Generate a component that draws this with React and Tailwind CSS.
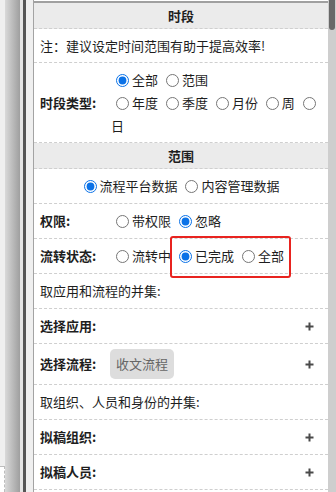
import React from "react";

const font = { fontFamily: '"Noto Sans CJK SC", "Noto Sans", sans-serif' };

function Radio({ checked, label, name }) {
  return (
    <>
      <input
        type="radio"
        name={name}
        defaultChecked={checked}
        className="ml-[5px] mr-[3px] h-[13px] w-[13px] align-[-2px] accent-[#0b72e7]"
      />
      <wbr />
      {label}
    </>
  );
}

function Plus() {
  return (
    <svg width="9" height="9" viewBox="0 0 9 9" className="shrink-0">
      <path d="M4.5 0.5v8M0.5 4.5h8" stroke="#4a4a4a" strokeWidth="2" />
    </svg>
  );
}

const Header = ({ children }) => (
  <div className="flex h-[26px] items-center justify-center border-b border-dashed border-[#cfcfcf] bg-[#ebebeb] font-bold">
    {children}
  </div>
);

const Row = ({ children, className = "" }) => (
  <div
    className={
      "flex h-[35px] items-center border-b border-dashed border-[#cfcfcf] pl-[6px] pr-[14px] " +
      className
    }
  >
    {children}
  </div>
);

const Label = ({ children }) => (
  <div className="w-[71px] shrink-0 font-bold">{children}</div>
);

export default function App() {
  return (
    <div
      className="relative flex h-[492px] w-[336px] overflow-hidden bg-white text-[13px] text-[#1e1e1e]"
      style={font}
    >
      {/* left frame strip */}
      <div className="flex w-[34px] shrink-0">
        <div className="flex w-[5px] flex-col bg-[#efefef]">
          <div className="flex-1" />
          <div className="h-[26px] border-r border-t border-dashed border-[#bdbdbd] bg-white" />
        </div>
        <div className="w-[15px] bg-gradient-to-r from-[#d9d9d9] to-[#9f9f9f]" />
        <div className="w-[3px] bg-[#e4e4e4]" />
        <div className="w-[3px] bg-[#555555]" />
        <div className="w-[7px] bg-[#efefef]" />
        <div className="w-px bg-[#a3a3a3]" />
      </div>

      {/* main panel */}
      <div className="flex-1 pt-px">
        <div className="border-t-2 border-[#a0a0a0]">
          <Header>时段</Header>
          <div className="flex h-[34px] items-center border-b border-dashed border-[#cfcfcf] pl-[6px]">
            注：建议设定时间范围有助于提高效率!
          </div>
          <div className="flex h-[80px] items-center border-b border-dashed border-[#cfcfcf] pl-[6px]">
            <Label>时段类型:</Label>
            <div className="w-[213px] leading-[23px]">
              <Radio name="t" checked label="全部" /> <Radio name="t" label="范围" />
              <br />
              <Radio name="p" label="年度" /> <Radio name="p" label="季度" />{" "}
              <Radio name="p" label="月份" /> <Radio name="p" label="周" />{" "}
              <Radio name="p" label="日" />
            </div>
          </div>
          <Header>范围</Header>
          <div className="flex h-[35px] items-center justify-center border-b border-dashed border-[#cfcfcf] pr-[4px]">
            <div>
              <Radio name="d" checked label="流程平台数据" /> <Radio name="d" label="内容管理数据" />
            </div>
          </div>
          <Row>
            <Label>权限:</Label>
            <div>
              <Radio name="q" label="带权限" /> <Radio name="q" checked label="忽略" />
            </div>
          </Row>
          <Row>
            <Label>流转状态:</Label>
            <div>
              <Radio name="s" label="流转中" /> <Radio name="s" checked label="已完成" />{" "}
              <Radio name="s" label="全部" />
            </div>
          </Row>
          <Row>取应用和流程的并集:</Row>
          <Row className="justify-between">
            <Label>选择应用:</Label>
            <Plus />
          </Row>
          <Row className="h-[41px] justify-between">
            <div className="flex items-center">
              <Label>选择流程:</Label>
              <div className="-ml-px flex h-[30px] items-center rounded-[5px] bg-[#dddddd] px-[6px] text-[#666666]">
                收文流程
              </div>
            </div>
            <Plus />
          </Row>
          <Row>取组织、人员和身份的并集:</Row>
          <Row className="justify-between">
            <Label>拟稿组织:</Label>
            <Plus />
          </Row>
          <Row className="justify-between">
            <Label>拟稿人员:</Label>
            <Plus />
          </Row>
        </div>
      </div>

      {/* scrollbar */}
      <div className="w-[8px] shrink-0 bg-[#cecece] pl-px">
        <div className="h-[30px] w-[6px] rounded-b-[3px] bg-[#686868]" />
      </div>

      {/* highlight box */}
      <div className="absolute left-[170px] top-[236px] h-[42px] w-[121px] rounded-[3px] border-2 border-[#e8231f]" />
    </div>
  );
}
